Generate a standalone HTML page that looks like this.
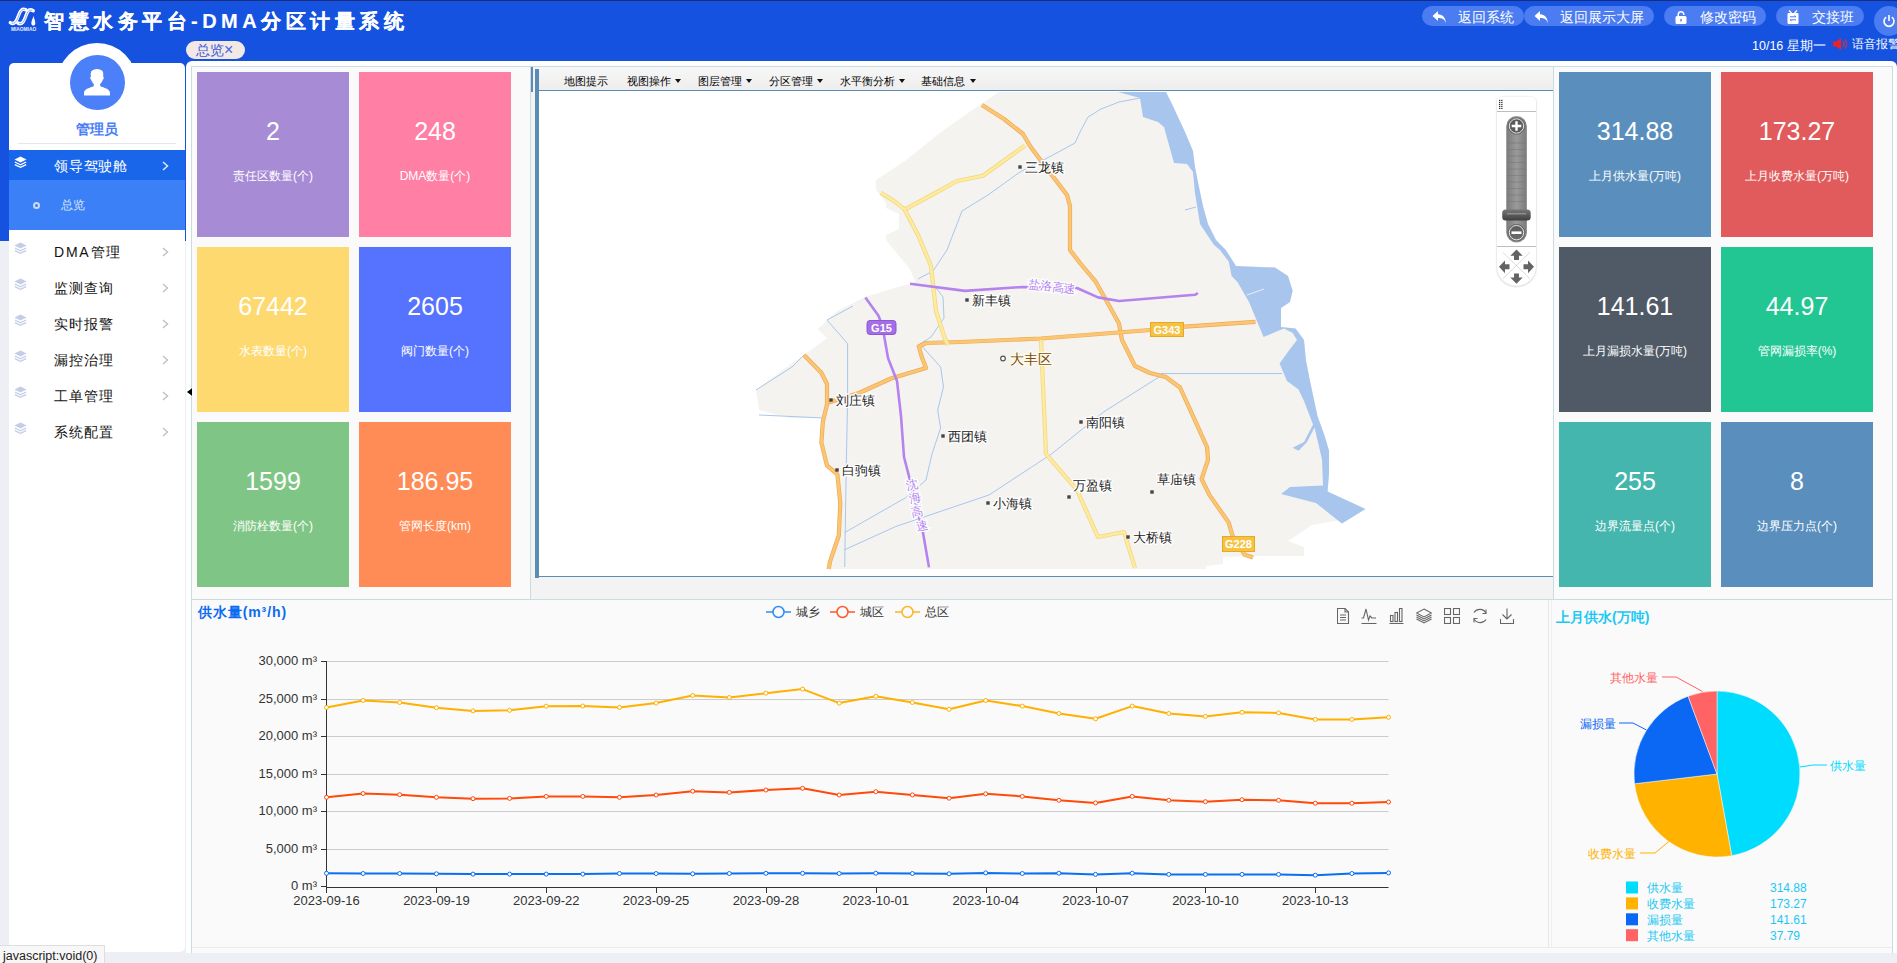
<!DOCTYPE html>
<html><head><meta charset="utf-8"><title>DMA</title>
<style>
*{margin:0;padding:0;box-sizing:border-box}
html,body{width:1897px;height:963px;overflow:hidden;background:#eeeff4;font-family:"Liberation Sans",sans-serif}
.abs{position:absolute}
svg{display:block}
svg text{font-family:"Liberation Sans",sans-serif}
#hdr{position:absolute;left:0;top:0;width:1897px;height:241px;background:linear-gradient(180deg,#1a2c7a 0,#1a2c7a 1px,#1552e0 1px,#1552e0 100%)}
#title{position:absolute;left:44px;top:9px;color:#fff;font-size:20px;font-weight:bold;letter-spacing:4.5px;white-space:nowrap;line-height:24px;-webkit-text-stroke:0.15px #fff}
.hbtn{position:absolute;top:6px;height:20px;border-radius:10px;background:#4b7cf2;color:#fff;font-size:14px;line-height:20px;white-space:nowrap}
.hbtn span{position:absolute;top:1px}
.hbtn svg{position:absolute;top:3px}
.mi{position:absolute;left:9px;width:176px;height:30px;font-size:14px;color:#222;white-space:nowrap}
.mi .t{position:absolute;left:45px;top:6px;line-height:18px;letter-spacing:1.2px}
.mi svg{position:absolute}
.tile{position:absolute;width:152px;height:165px;color:#fff;text-align:center}
.tile .n{position:absolute;left:0;right:0;top:44px;font-size:25px;line-height:30px}
.tile .l{position:absolute;left:0;right:0;top:97px;font-size:12px;line-height:14px}
.mt{position:absolute;top:74px;font-size:11px;line-height:14px;color:#000;white-space:nowrap}
.arr{position:absolute;top:79px;width:0;height:0;border-left:3.5px solid transparent;border-right:3.5px solid transparent;border-top:4px solid #111}
</style></head><body>
<div id="hdr"></div>
<svg class="abs" style="left:5px;top:3px" width="40" height="32" viewBox="5 3 40 32">
<path d="M10.3,22.6 C14.5,25.5 16.5,21 18.5,15.5 C20.5,10 22,8.3 26,9.8" fill="none" stroke="#fff" stroke-width="3.4" stroke-linecap="round"/>
<path d="M11.5,23 C15,24.6 17,20.5 18.8,15.5 C20.6,10.5 22,9 25,9.8" fill="none" stroke="#2d62e4" stroke-width="0.5"/>
<path d="M17.8,23 C22,25.8 24,21 26,15.5 C28,10 29.5,8.5 33.2,10.8" fill="none" stroke="#fff" stroke-width="3.4" stroke-linecap="round"/>
<path d="M19,23.4 C22.5,25 24.5,20.5 26.3,15.5 C28.1,10.5 29.5,9.2 32.2,10.5" fill="none" stroke="#2d62e4" stroke-width="0.5"/>
<path d="M33.5,16 C34.5,19 35.3,21.5 35.3,23.3 C35.3,24.7 34.4,25.6 33.3,25.6 C32.2,25.6 31.3,24.7 31.3,23.3 C31.3,21.5 32.5,19 33.5,16Z" fill="#fff"/>
<text x="11" y="30.9" font-size="4.8" fill="#e8f0ff" font-weight="bold" textLength="25.2" lengthAdjust="spacingAndGlyphs">MIAOMIAO</text>
</svg>
<div id="title">智慧水务平台-DMA分区计量系统</div>
<div class="hbtn" style="left:1422px;width:102px"><span style="left:36px">返回系统</span></div>
<div class="abs" style="left:1432px;top:10px"><svg width="15" height="14" viewBox="0 0 15 14"><path d="M6,1 L0.5,6 L6,11 L6,8 C10,8 12.5,9 14,13 C13.5,7.5 11,4.5 6,4.2 Z" fill="#fff"/></svg></div>
<div class="hbtn" style="left:1524px;width:130px"><span style="left:36px">返回展示大屏</span></div>
<div class="abs" style="left:1534px;top:10px"><svg width="15" height="14" viewBox="0 0 15 14"><path d="M6,1 L0.5,6 L6,11 L6,8 C10,8 12.5,9 14,13 C13.5,7.5 11,4.5 6,4.2 Z" fill="#fff"/></svg></div>
<div class="hbtn" style="left:1664px;width:102px"><span style="left:36px">修改密码</span></div>
<div class="abs" style="left:1674px;top:10px"><svg width="14" height="14" viewBox="0 0 14 14"><path d="M3.5,6 V4.5 A3.5,3.5 0 0 1 10.5,4.5 V5 H9 V4.5 A2,2 0 0 0 5,4.5 V6Z" fill="#fff"/><rect x="1.5" y="6" width="11" height="8" rx="1.5" fill="#fff"/><rect x="6.3" y="9" width="1.4" height="2.5" fill="#4b7cf2"/></svg></div>
<div class="hbtn" style="left:1776px;width:88px"><span style="left:36px">交接班</span></div>
<div class="abs" style="left:1786px;top:10px"><svg width="14" height="14" viewBox="0 0 14 14"><path d="M3,0.5 L5.5,3 M11,0.5 L8.5,3" stroke="#fff" stroke-width="1.3"/><rect x="1.5" y="3" width="11" height="11" rx="1" fill="#fff"/><path d="M4,6.8 H10 L8.5,5.6 M10,9.8 H4 L5.5,11" stroke="#4b7cf2" stroke-width="1" fill="none"/></svg></div>
<div class="abs" style="left:1874px;top:6px;width:30px;height:30px;border-radius:50%;background:#4b7cf2"></div>
<svg class="abs" style="left:1882px;top:14px" width="14" height="14" viewBox="0 0 14 14"><path d="M4.2,3.2 A5,5 0 1 0 9.8,3.2" fill="none" stroke="#fff" stroke-width="1.6"/><line x1="7" y1="1" x2="7" y2="7" stroke="#fff" stroke-width="1.6"/></svg>
<div class="abs" style="left:1752px;top:39px;color:#fff;font-size:12.5px;line-height:14px;white-space:nowrap">10/16 星期一</div>
<svg class="abs" style="left:1833px;top:38px" width="16" height="12" viewBox="0 0 16 12"><rect x="0" y="3.5" width="3" height="5" fill="#e8232a"/><path d="M3,3.5 L8,0 V12 L3,8.5Z" fill="#e8232a"/><path d="M10,3 Q12,6 10,9 M12,1.5 Q15,6 12,10.5" stroke="#d03040" stroke-width="1.2" fill="none"/></svg>
<div class="abs" style="left:1852px;top:37px;color:#fff;font-size:12px;line-height:14px;white-space:nowrap">语音报警</div>
<div class="abs" style="left:186px;top:41px;width:59px;height:18px;border-radius:9px;background:#f2e9e7;color:#3c5bd8;font-size:14px;line-height:18px;padding-left:10px;white-space:nowrap">总览<span style="font-size:16px;color:#4a66e8;vertical-align:top">×</span></div>
<div class="abs" style="left:9px;top:63px;width:176px;height:889px;background:#fff;border-radius:5px"></div>
<div class="abs" style="left:57px;top:42.5px;width:80px;height:80px;border-radius:50%;background:#fff"></div>
<div class="abs" style="left:69.5px;top:54.5px;width:55px;height:55px;border-radius:50%;background:#4c80f8"></div>
<svg class="abs" style="left:83px;top:68px" width="28" height="29" viewBox="0 0 28 29"><path d="M14,1 C11.5,1 10.5,1.8 9.5,2.3 C8,3 7.5,5 7.8,8.5 C7,9.3 7.1,11 8,11.6 C8.6,13.5 9.6,15 10.8,16 V18.3 C7,19.8 1.5,20.8 1,24.5 V27.5 H27 V24.5 C26.5,20.8 21,19.8 17.2,18.3 V16 C18.4,15 19.4,13.5 20,11.6 C20.9,11 21,9.3 20.2,8.5 C20.5,5 20,3 18.5,2.3 C17.5,1.8 16.5,1 14,1Z" fill="#fff"/></svg>
<div class="abs" style="left:9px;top:120px;width:176px;text-align:center;color:#4a7ef6;font-size:14px;line-height:18px;font-weight:bold">管理员</div>
<div class="abs" style="left:18px;top:143px;width:158px;height:1px;background:#e4e7ef"></div>
<div class="abs" style="left:9px;top:150px;width:176px;height:30px;background:#1a66eb"></div>
<div class="abs" style="left:9px;top:180px;width:176px;height:50px;background:#3b80f6"></div>
<div class="abs" style="left:14px;top:156px"><svg width="13" height="13" viewBox="0 0 13 13"><path d="M6.5,0.5 L12.5,3.5 L6.5,6.5 L0.5,3.5Z" fill="#fff"/><path d="M0.8,6 L6.5,8.8 L12.2,6 M0.8,8.6 L6.5,11.4 L12.2,8.6" fill="none" stroke="#fff" stroke-width="1.3"/></svg></div>
<div class="abs" style="left:54px;top:157px;color:#fff;font-size:14px;line-height:18px;letter-spacing:0.8px;white-space:nowrap">领导驾驶舱</div>
<div class="abs" style="left:162px;top:161px"><svg width="7" height="10" viewBox="0 0 7 10"><path d="M1,1 L5.5,5 L1,9" fill="none" stroke="#e0e8ff" stroke-width="1.5"/></svg></div>
<div class="abs" style="left:33px;top:202px;width:7px;height:7px;border-radius:50%;border:2px solid #c9d9f8"></div>
<div class="abs" style="left:61px;top:197px;color:#dce6fb;font-size:12px;line-height:16px">总览</div>
<div class="abs" style="left:14px;top:242px"><svg width="13" height="13" viewBox="0 0 13 13"><path d="M6.5,0.5 L12.5,3.5 L6.5,6.5 L0.5,3.5Z" fill="#c3cde6"/><path d="M0.8,6 L6.5,8.8 L12.2,6 M0.8,8.6 L6.5,11.4 L12.2,8.6" fill="none" stroke="#c3cde6" stroke-width="1.3"/></svg></div>
<div class="abs" style="left:54px;top:243px;color:#111;font-size:14px;line-height:18px;letter-spacing:1.8px;white-space:nowrap">DMA管理</div>
<div class="abs" style="left:162px;top:247px"><svg width="7" height="10" viewBox="0 0 7 10"><path d="M1,1 L5.5,5 L1,9" fill="none" stroke="#c2c2c2" stroke-width="1.5"/></svg></div>
<div class="abs" style="left:14px;top:278px"><svg width="13" height="13" viewBox="0 0 13 13"><path d="M6.5,0.5 L12.5,3.5 L6.5,6.5 L0.5,3.5Z" fill="#c3cde6"/><path d="M0.8,6 L6.5,8.8 L12.2,6 M0.8,8.6 L6.5,11.4 L12.2,8.6" fill="none" stroke="#c3cde6" stroke-width="1.3"/></svg></div>
<div class="abs" style="left:54px;top:279px;color:#111;font-size:14px;line-height:18px;letter-spacing:0.9px;white-space:nowrap">监测查询</div>
<div class="abs" style="left:162px;top:283px"><svg width="7" height="10" viewBox="0 0 7 10"><path d="M1,1 L5.5,5 L1,9" fill="none" stroke="#c2c2c2" stroke-width="1.5"/></svg></div>
<div class="abs" style="left:14px;top:314px"><svg width="13" height="13" viewBox="0 0 13 13"><path d="M6.5,0.5 L12.5,3.5 L6.5,6.5 L0.5,3.5Z" fill="#c3cde6"/><path d="M0.8,6 L6.5,8.8 L12.2,6 M0.8,8.6 L6.5,11.4 L12.2,8.6" fill="none" stroke="#c3cde6" stroke-width="1.3"/></svg></div>
<div class="abs" style="left:54px;top:315px;color:#111;font-size:14px;line-height:18px;letter-spacing:0.9px;white-space:nowrap">实时报警</div>
<div class="abs" style="left:162px;top:319px"><svg width="7" height="10" viewBox="0 0 7 10"><path d="M1,1 L5.5,5 L1,9" fill="none" stroke="#c2c2c2" stroke-width="1.5"/></svg></div>
<div class="abs" style="left:14px;top:350px"><svg width="13" height="13" viewBox="0 0 13 13"><path d="M6.5,0.5 L12.5,3.5 L6.5,6.5 L0.5,3.5Z" fill="#c3cde6"/><path d="M0.8,6 L6.5,8.8 L12.2,6 M0.8,8.6 L6.5,11.4 L12.2,8.6" fill="none" stroke="#c3cde6" stroke-width="1.3"/></svg></div>
<div class="abs" style="left:54px;top:351px;color:#111;font-size:14px;line-height:18px;letter-spacing:0.9px;white-space:nowrap">漏控治理</div>
<div class="abs" style="left:162px;top:355px"><svg width="7" height="10" viewBox="0 0 7 10"><path d="M1,1 L5.5,5 L1,9" fill="none" stroke="#c2c2c2" stroke-width="1.5"/></svg></div>
<div class="abs" style="left:14px;top:386px"><svg width="13" height="13" viewBox="0 0 13 13"><path d="M6.5,0.5 L12.5,3.5 L6.5,6.5 L0.5,3.5Z" fill="#c3cde6"/><path d="M0.8,6 L6.5,8.8 L12.2,6 M0.8,8.6 L6.5,11.4 L12.2,8.6" fill="none" stroke="#c3cde6" stroke-width="1.3"/></svg></div>
<div class="abs" style="left:54px;top:387px;color:#111;font-size:14px;line-height:18px;letter-spacing:0.9px;white-space:nowrap">工单管理</div>
<div class="abs" style="left:162px;top:391px"><svg width="7" height="10" viewBox="0 0 7 10"><path d="M1,1 L5.5,5 L1,9" fill="none" stroke="#c2c2c2" stroke-width="1.5"/></svg></div>
<div class="abs" style="left:14px;top:422px"><svg width="13" height="13" viewBox="0 0 13 13"><path d="M6.5,0.5 L12.5,3.5 L6.5,6.5 L0.5,3.5Z" fill="#c3cde6"/><path d="M0.8,6 L6.5,8.8 L12.2,6 M0.8,8.6 L6.5,11.4 L12.2,8.6" fill="none" stroke="#c3cde6" stroke-width="1.3"/></svg></div>
<div class="abs" style="left:54px;top:423px;color:#111;font-size:14px;line-height:18px;letter-spacing:0.9px;white-space:nowrap">系统配置</div>
<div class="abs" style="left:162px;top:427px"><svg width="7" height="10" viewBox="0 0 7 10"><path d="M1,1 L5.5,5 L1,9" fill="none" stroke="#c2c2c2" stroke-width="1.5"/></svg></div>
<div class="abs" style="left:186px;top:61px;width:1711px;height:892px;background:#fff;border-radius:6px 6px 0 0"></div>
<div class="abs" style="left:191px;top:66px;width:1702px;height:887px;background:#fafafa;border:1px solid #c9dce2;border-bottom:none"></div>
<div class="abs" style="left:530px;top:67px;width:1024px;height:532px;background:#f3f3f3;border-left:1px solid #c9dce2;border-right:1px solid #c9dce2"></div>
<div class="abs" style="left:531px;top:67px;width:2px;height:25px;background:#5b8db4"></div>
<div class="abs" style="left:535px;top:69px;width:4px;height:509px;background:#5b8db4"></div>
<div class="abs" style="left:539px;top:67px;width:1014px;height:24px;background:linear-gradient(#f7f7f7,#ededed)"></div>
<div class="abs" style="left:539px;top:90px;width:1014px;height:1px;background:#5b8db4"></div>
<div class="abs" style="left:539px;top:91px;width:1014px;height:485px;background:#fff"></div>
<div class="abs" style="left:539px;top:576px;width:1014px;height:1px;background:#5b8db4"></div>
<div class="mt" style="left:564px">地图提示</div>
<div class="mt" style="left:627px">视图操作</div>
<div class="arr" style="left:675px"></div>
<div class="mt" style="left:698px">图层管理</div>
<div class="arr" style="left:746px"></div>
<div class="mt" style="left:769px">分区管理</div>
<div class="arr" style="left:817px"></div>
<div class="mt" style="left:840px">水平衡分析</div>
<div class="arr" style="left:899px"></div>
<div class="mt" style="left:921px">基础信息</div>
<div class="arr" style="left:970px"></div>
<div class="abs" style="left:191px;top:599px;width:1702px;height:1px;background:#c9dce2"></div>
<div class="abs" style="left:1548px;top:600px;width:1px;height:347px;background:#e6e6e6"></div>
<div class="abs" style="left:1551px;top:600px;width:1px;height:347px;background:#efefef"></div>
<div class="abs" style="left:192px;top:947px;width:1700px;height:1px;background:#ebebeb"></div>
<div class="abs" style="left:198px;top:603px;color:#0a6cf0;font-size:14px;line-height:18px;font-weight:bold;letter-spacing:0.9px;white-space:nowrap">供水量(m³/h)</div>
<div class="abs" style="left:1556px;top:608px;color:#1cc8f4;font-size:14px;line-height:18px;font-weight:bold;white-space:nowrap">上月供水(万吨)</div>
<svg class="abs" style="left:766px;top:605px" width="25" height="14" viewBox="0 0 25 14"><line x1="0" y1="7" x2="25" y2="7" stroke="#2f8cf5" stroke-width="1.5"/><circle cx="12.5" cy="7" r="5.5" fill="#fafafa" stroke="#2f8cf5" stroke-width="1.5"/></svg>
<div class="abs" style="left:796px;top:604px;color:#333;font-size:12px;line-height:16px">城乡</div>
<svg class="abs" style="left:830px;top:605px" width="25" height="14" viewBox="0 0 25 14"><line x1="0" y1="7" x2="25" y2="7" stroke="#fc5a2a" stroke-width="1.5"/><circle cx="12.5" cy="7" r="5.5" fill="#fafafa" stroke="#fc5a2a" stroke-width="1.5"/></svg>
<div class="abs" style="left:860px;top:604px;color:#333;font-size:12px;line-height:16px">城区</div>
<svg class="abs" style="left:895px;top:605px" width="25" height="14" viewBox="0 0 25 14"><line x1="0" y1="7" x2="25" y2="7" stroke="#fdb52a" stroke-width="1.5"/><circle cx="12.5" cy="7" r="5.5" fill="#fafafa" stroke="#fdb52a" stroke-width="1.5"/></svg>
<div class="abs" style="left:925px;top:604px;color:#333;font-size:12px;line-height:16px">总区</div>
<svg class="abs" style="left:1337px;top:608px" width="16" height="16" viewBox="0 0 16 16"><path d="M0.5,0.5 H8 L11.5,4 V15.5 H0.5Z" fill="none" stroke="#666" stroke-width="1.1"/><path d="M8,0.5 V4 H11.5" fill="none" stroke="#666" stroke-width="1.1"/><path d="M3,7 H9 M3,9.5 H9 M3,12 H9" fill="none" stroke="#666" stroke-width="1.1"/></svg>
<svg class="abs" style="left:1361px;top:608px" width="16" height="16" viewBox="0 0 16 16"><path d="M0.5,10 L2.5,10 L5,1 L7.5,12 L9,8 L11,10 H15" fill="none" stroke="#666" stroke-width="1.1"/><path d="M0.5,15.5 H15.5" fill="none" stroke="#666" stroke-width="1.1"/></svg>
<svg class="abs" style="left:1389px;top:608px" width="16" height="16" viewBox="0 0 16 16"><rect x="1.5" y="7.5" width="2.5" height="6" fill="none" stroke="#666" stroke-width="1.1"/><rect x="6" y="4.5" width="2.5" height="9" fill="none" stroke="#666" stroke-width="1.1"/><rect x="10.5" y="0.5" width="2.5" height="13" fill="none" stroke="#666" stroke-width="1.1"/><path d="M0.5,15.5 H14.5" fill="none" stroke="#666" stroke-width="1.1"/></svg>
<svg class="abs" style="left:1416px;top:608px" width="16" height="16" viewBox="0 0 16 16"><path d="M8,1 L15.5,5 L8,9 L0.5,5Z" fill="none" stroke="#666" stroke-width="1.1"/><path d="M0.5,7 L8,11 L15.5,7 M0.5,9 L8,13 L15.5,9 M0.5,11 L8,15 L15.5,11" fill="none" stroke="#666" stroke-width="1.1"/></svg>
<svg class="abs" style="left:1444px;top:608px" width="16" height="16" viewBox="0 0 16 16"><rect x="0.5" y="0.5" width="6" height="6" fill="none" stroke="#666" stroke-width="1.1"/><rect x="9.5" y="0.5" width="6" height="6" fill="none" stroke="#666" stroke-width="1.1"/><rect x="0.5" y="9.5" width="6" height="6" fill="none" stroke="#666" stroke-width="1.1"/><rect x="9.5" y="9.5" width="6" height="6" fill="none" stroke="#666" stroke-width="1.1"/></svg>
<svg class="abs" style="left:1472px;top:608px" width="16" height="16" viewBox="0 0 16 16"><path d="M14,5 A7,7 0 0 0 2,4.5 M2,11 A7,7 0 0 0 14,11.5" fill="none" stroke="#666" stroke-width="1.1"/><path d="M14,1.5 V5.5 H10.5 M2,14.5 V10.5 H5.5" fill="none" stroke="#666" stroke-width="1.1"/></svg>
<svg class="abs" style="left:1500px;top:608px" width="16" height="16" viewBox="0 0 16 16"><path d="M7,0.5 V11 M2.5,6.5 L7,11 L11.5,6.5" fill="none" stroke="#666" stroke-width="1.1"/><path d="M0.5,11 V15.5 H13.5 V11" fill="none" stroke="#666" stroke-width="1.1"/></svg>
<svg class="abs" style="left:539px;top:91px" width="1014" height="485" viewBox="539 91 1014 485">
<polygon points="999,92 1166,92 1172,104 1178,117 1185,132 1193,151 1195,167 1199,187 1203,206 1208,224 1216,240 1225.8,250 1236,266 1275,267.5 1288,276 1292.7,290.7 1290,302 1281,308 1281,327 1295.6,328.5 1304,340 1306,360.5 1310,381 1317.5,416 1324.7,436 1329,450.7 1329,474 1327.6,491.5 1365.5,509 1342,523.5 1338,520.5 1312,525 1288,541 1304,547 1304,556 1253,556 1223,557 1223,564 1206,566 1206,569 830,569 829,565 840,533 839,474 826,463 823,437 824,418 789,418 759,410 756,390 787,367 804,355 827,338 818,329 836,312 853,303 865,297 915,282 910,269 899,256 886,240 886,235 899,229 899,214 886,208 886,203 876,190 876,180 905,161 941,132 981,104 999,92" fill="#f4f3ef"/>
<polygon points="1166,92 1172,104 1178,117 1185,132 1193,151 1195,167 1199,187 1203,206 1208,224 1216,240 1225.8,250 1236,266 1275,267.5 1288,276 1292.7,290.7 1290,302 1281,308 1281,327 1295.6,328.5 1304,340 1306,360.5 1310,381 1317.5,416 1324.7,436 1329,450.7 1329,474 1327.6,491.5 1365.5,509 1342,523.5 1338,520.5 1316,503 1281,494 1290,487 1323,485.6 1322,459.5 1314.5,427.5 1307,442 1298.5,450.7 1292.7,447.8 1304,442 1313,424.5 1304,401 1298.5,389.6 1287,381 1279.6,363.5 1290,349 1297,340 1292.7,333 1284,328.5 1263.6,337 1249,302 1237.5,282 1231.6,276 1228.7,261.6 1220,250 1214,245 1200,224 1195,193 1193,172 1187,164 1174,163 1164,127 1158,122 1143,117 1140,98 1118,92" fill="#a8c5ed"/>
<polyline points="1140,98 1119,102 1101,109 1088,117 1080,132 1075,143 1051,156 1020,172 988,195 962,211 947,250 933,271 918,279" fill="none" stroke="#a9c6ee" stroke-width="1"/>
<polyline points="933,284 943,297 944,318 931,337 920,344 940.6,367 943.5,387 937.7,410 940.6,428 932,454 926,480 905.7,497.7 844.7,532.5" fill="none" stroke="#a9c6ee" stroke-width="1"/>
<polyline points="853,306 827,320 847.6,343.6 847.6,400 846,480 844.7,567" fill="none" stroke="#a9c6ee" stroke-width="1"/>
<polyline points="1160.6,376 1103.5,412 1051.5,454 989,495 895.8,526.5 844,550" fill="none" stroke="#a9c6ee" stroke-width="1"/>
<polyline points="1160.6,373.5 1282,373.5" fill="none" stroke="#a9c6ee" stroke-width="1"/>
<polyline points="756,390 792,367 804,355" fill="none" stroke="#a9c6ee" stroke-width="1"/>
<polyline points="759,415 824,418" fill="none" stroke="#a9c6ee" stroke-width="1"/>
<polyline points="1185,210 1196,207" fill="none" stroke="#a9c6ee" stroke-width="1"/>
<line x1="1247" y1="295" x2="1264" y2="289" stroke="#e8f0fa" stroke-width="1"/>
<polyline points="982,105 1004,119 1023,134 1030,146 1051,174 1067,195 1070,206 1070,250 1080,263 1095.7,281.7 1108.8,305 1119,323.6 1122,340 1135,366 1150,373 1165.8,377 1180,387.5 1196,422.6 1207,447 1208,460 1201.6,479 1209.7,495.4 1228.6,522.4 1232.6,536 1244.8,554.8 1253,557.5" fill="none" stroke="#eeaa55" stroke-width="4.2" stroke-linejoin="round"/>
<polyline points="982,105 1004,119 1023,134 1030,146 1051,174 1067,195 1070,206 1070,250 1080,263 1095.7,281.7 1108.8,305 1119,323.6 1122,340 1135,366 1150,373 1165.8,377 1180,387.5 1196,422.6 1207,447 1208,460 1201.6,479 1209.7,495.4 1228.6,522.4 1232.6,536 1244.8,554.8 1253,557.5" fill="none" stroke="#fbc673" stroke-width="2.8" stroke-linejoin="round"/>
<polyline points="827,403 859,393 891,378.5 926,368 921.7,356.7 918.8,346.5 926,343 960,342 1041,338.5 1150.7,330 1184.7,326.7 1255.4,321.8" fill="none" stroke="#eeaa55" stroke-width="4.2" stroke-linejoin="round"/>
<polyline points="827,403 859,393 891,378.5 926,368 921.7,356.7 918.8,346.5 926,343 960,342 1041,338.5 1150.7,330 1184.7,326.7 1255.4,321.8" fill="none" stroke="#fbc673" stroke-width="2.8" stroke-linejoin="round"/>
<polyline points="804,355 821.4,372.7 827,384 827,404.6 822.8,422 821.4,442.4 827,465.7 837.4,474.4 840.3,503.5 838.8,535.5 830,561.6 828.7,569" fill="none" stroke="#eeaa55" stroke-width="4.2" stroke-linejoin="round"/>
<polyline points="804,355 821.4,372.7 827,384 827,404.6 822.8,422 821.4,442.4 827,465.7 837.4,474.4 840.3,503.5 838.8,535.5 830,561.6 828.7,569" fill="none" stroke="#fbc673" stroke-width="2.8" stroke-linejoin="round"/>
<polyline points="1025,145.6 1009,157 983,175.7 957,181 936,192.7 904.7,209.7 896.9,203 881,192.7" fill="none" stroke="#f2d87c" stroke-width="4.2" stroke-linejoin="round"/>
<polyline points="1025,145.6 1009,157 983,175.7 957,181 936,192.7 904.7,209.7 896.9,203 881,192.7" fill="none" stroke="#fdeba2" stroke-width="2.6" stroke-linejoin="round"/>
<polyline points="904.7,209.7 918,235 931,266 933,284 936,311 945,339 948,345" fill="none" stroke="#f2d87c" stroke-width="4.2" stroke-linejoin="round"/>
<polyline points="904.7,209.7 918,235 931,266 933,284 936,311 945,339 948,345" fill="none" stroke="#fdeba2" stroke-width="2.6" stroke-linejoin="round"/>
<polyline points="1041,340 1046,454 1077,490 1098,537 1124,532 1135,568" fill="none" stroke="#f2d87c" stroke-width="4.2" stroke-linejoin="round"/>
<polyline points="1041,340 1046,454 1077,490 1098,537 1124,532 1135,568" fill="none" stroke="#fdeba2" stroke-width="2.6" stroke-linejoin="round"/>
<polyline points="910,283.8 965,290.9 1022.5,287 1077,288 1098,297.4 1119,301 1195,294.8 1198,293" fill="none" stroke="#b582ee" stroke-width="2.6" stroke-linejoin="round"/>
<polyline points="865.4,297.4 878.5,315.7 882.4,326 888,358 897,381 901,416 904,457 911.5,486 923,532.6 929,567.4" fill="none" stroke="#b582ee" stroke-width="2.6" stroke-linejoin="round"/>
<rect x="867" y="320.5" width="29" height="14" rx="3" fill="#a46ee6" stroke="#8e57d8" stroke-width="1"/>
<text x="881.5" y="331.5" text-anchor="middle" font-size="11" font-weight="bold" fill="#fff">G15</text>
<rect x="1150.5" y="322.5" width="33" height="14" fill="#f5c243" stroke="#e8a820" stroke-width="1"/>
<text x="1167" y="333.5" text-anchor="middle" font-size="11" font-weight="bold" fill="#fff">G343</text>
<rect x="1222.5" y="536.5" width="32" height="15" fill="#f5c243" stroke="#e8a820" stroke-width="1"/>
<text x="1238.5" y="548" text-anchor="middle" font-size="11" font-weight="bold" fill="#fff">G228</text>
<text x="1028" y="291" font-size="12" fill="#b384ef" stroke="#fff" stroke-width="2.5" paint-order="stroke" transform="rotate(7 1055 287)">盐洛高速</text>
<g font-size="12" fill="#b384ef" stroke="#fff" stroke-width="2.5" paint-order="stroke"><text x="906.4" y="488.5" transform="rotate(-12 912.4 484.0)">沈</text><text x="909.0" y="502.2" transform="rotate(-12 915.0 497.7)">海</text><text x="911.4" y="515.9" transform="rotate(-12 917.4 511.4)">高</text><text x="915.6" y="529.6" transform="rotate(-12 921.6 525.1)">速</text></g>
<g font-size="12.5" fill="#222" stroke="#fff" stroke-width="2.5" paint-order="stroke">
<text x="1025" y="171.5">三龙镇</text>
<text x="972" y="304.5">新丰镇</text>
<text x="836" y="404.5">刘庄镇</text>
<text x="948" y="440.5">西团镇</text>
<text x="1086" y="426.5">南阳镇</text>
<text x="842" y="474.5">白驹镇</text>
<text x="993" y="507.5">小海镇</text>
<text x="1133" y="541.5">大桥镇</text>
<text x="1073" y="489.5">万盈镇</text><text x="1157" y="483.5">草庙镇</text>
</g>
<rect x="1018.3" y="165.3" width="3.4" height="3.4" fill="#444"/>
<rect x="965.3" y="298.3" width="3.4" height="3.4" fill="#444"/>
<rect x="829.3" y="398.3" width="3.4" height="3.4" fill="#444"/>
<rect x="941.3" y="434.3" width="3.4" height="3.4" fill="#444"/>
<rect x="1079.3" y="420.3" width="3.4" height="3.4" fill="#444"/>
<rect x="835.3" y="468.3" width="3.4" height="3.4" fill="#444"/>
<rect x="986.3" y="501.3" width="3.4" height="3.4" fill="#444"/>
<rect x="1126.3" y="535.3" width="3.4" height="3.4" fill="#444"/>
<rect x="1067.3" y="495.3" width="3.4" height="3.4" fill="#444"/>
<rect x="1150.3" y="490.3" width="3.4" height="3.4" fill="#444"/>
<circle cx="1003" cy="358.5" r="2.3" fill="#fff" stroke="#555" stroke-width="1.2"/>
<text x="1010" y="363.5" font-size="13.5" fill="#7a4a1a" stroke="#fffbe6" stroke-width="2.5" paint-order="stroke">大丰区</text>
</svg>
<svg class="abs" style="left:1490px;top:90px" width="56" height="205" viewBox="1490 90 56 205">
<defs><linearGradient id="zg" x1="0" x2="1" y1="0" y2="0"><stop offset="0" stop-color="#7a7a7a"/><stop offset="0.5" stop-color="#9a9a9a"/><stop offset="1" stop-color="#7a7a7a"/></linearGradient>
<linearGradient id="zh" x1="0" x2="0" y1="0" y2="1"><stop offset="0" stop-color="#777"/><stop offset="1" stop-color="#3f3f3f"/></linearGradient>
<linearGradient id="zb" x1="0" x2="0" y1="0" y2="1"><stop offset="0" stop-color="#5a5a5a"/><stop offset="1" stop-color="#6e6e6e"/></linearGradient>
<filter id="zs" x="-20%" y="-10%" width="140%" height="120%"><feGaussianBlur stdDeviation="0.9"/></filter></defs>
<path d="M1497,102 Q1497,97 1502,97 H1531 Q1536,97 1536,102 V266.5 A19.5,19.5 0 0 1 1497,266.5Z" fill="#999" opacity="0.55" filter="url(#zs)" transform="translate(0,0.6)"/>
<path d="M1497,102 Q1497,97 1502,97 H1531 Q1536,97 1536,102 V266.5 A19.5,19.5 0 0 1 1497,266.5Z" fill="#fff"/>
<path d="M1497,111.5 H1536 M1497,246.5 H1536" stroke="#bdbdbd" stroke-width="1"/>
<g fill="#333"><rect x="1499.0" y="99.8" width="1.3" height="1.2"/><rect x="1499.0" y="101.8" width="1.3" height="1.2"/><rect x="1499.0" y="103.8" width="1.3" height="1.2"/><rect x="1499.0" y="105.8" width="1.3" height="1.2"/><rect x="1499.0" y="107.8" width="1.3" height="1.2"/><rect x="1501.2" y="99.8" width="1.3" height="1.2"/><rect x="1501.2" y="101.8" width="1.3" height="1.2"/><rect x="1501.2" y="103.8" width="1.3" height="1.2"/><rect x="1501.2" y="105.8" width="1.3" height="1.2"/><rect x="1501.2" y="107.8" width="1.3" height="1.2"/></g>
<rect x="1506.3" y="116" width="20.5" height="126.5" rx="10.25" fill="url(#zg)"/>
<g stroke="#777" stroke-width="0.7" opacity="0.8"><line x1="1507" y1="143.0" x2="1526" y2="143.0"/><line x1="1507" y1="149.5" x2="1526" y2="149.5"/><line x1="1507" y1="156.0" x2="1526" y2="156.0"/><line x1="1507" y1="162.5" x2="1526" y2="162.5"/><line x1="1507" y1="169.0" x2="1526" y2="169.0"/><line x1="1507" y1="175.5" x2="1526" y2="175.5"/><line x1="1507" y1="182.0" x2="1526" y2="182.0"/><line x1="1507" y1="188.5" x2="1526" y2="188.5"/><line x1="1507" y1="195.0" x2="1526" y2="195.0"/><line x1="1507" y1="201.5" x2="1526" y2="201.5"/></g>
<circle cx="1516.5" cy="126" r="8.3" fill="#5c5c5c" stroke="#6a6a6a" stroke-width="1"/>
<circle cx="1516.5" cy="126" r="7.2" fill="none" stroke="#e6e6e6" stroke-width="1"/>
<path d="M1516.5,121.2 V130.8 M1511.7,126 H1521.3" stroke="#fff" stroke-width="2.4"/>
<circle cx="1516.5" cy="232.7" r="8.3" fill="url(#zb)" stroke="#6a6a6a" stroke-width="1"/>
<circle cx="1516.5" cy="232.7" r="7.2" fill="none" stroke="#e6e6e6" stroke-width="1"/>
<path d="M1511.5,232.7 H1521.5" stroke="#fff" stroke-width="2.6"/>
<rect x="1502.2" y="209.5" width="28.5" height="11" rx="3.5" fill="url(#zh)"/>
<path d="M1507,213.8 H1526" stroke="#aaa" stroke-width="0.9"/>
<path d="M1503,252.4 L1529.8,278.6 M1529.8,252.4 L1503,278.6" stroke="#c8c8c8" stroke-width="0.7"/>
<g fill="#646464">
<path d="M1516.5,249.6 L1522.7,255.8 H1519 V259.9 H1514 V255.8 H1510.3Z"/>
<path d="M1516.5,283.7 L1522.7,277.5 H1519 V273.4 H1514 V277.5 H1510.3Z"/>
<path d="M1499,266.8 L1505,260.5 V264.3 H1509.5 V269.3 H1505 V273.2Z"/>
<path d="M1534,266.8 L1528,260.5 V264.3 H1523.5 V269.3 H1528 V273.2Z"/>
</g>
</svg>
<div class="tile" style="left:197px;top:72px;background:#a78bd5"><div class="n">2</div><div class="l">责任区数量(个)</div></div>
<div class="tile" style="left:359px;top:72px;background:#ff7fa5"><div class="n">248</div><div class="l">DMA数量(个)</div></div>
<div class="tile" style="left:197px;top:247px;background:#fdd970"><div class="n">67442</div><div class="l">水表数量(个)</div></div>
<div class="tile" style="left:359px;top:247px;background:#5573fe"><div class="n">2605</div><div class="l">阀门数量(个)</div></div>
<div class="tile" style="left:197px;top:422px;background:#7fc686"><div class="n">1599</div><div class="l">消防栓数量(个)</div></div>
<div class="tile" style="left:359px;top:422px;background:#ff8c56"><div class="n">186.95</div><div class="l">管网长度(km)</div></div>
<div class="tile" style="left:1559px;top:72px;background:#5a8fbd"><div class="n">314.88</div><div class="l">上月供水量(万吨)</div></div>
<div class="tile" style="left:1721px;top:72px;background:#e15a5c"><div class="n">173.27</div><div class="l">上月收费水量(万吨)</div></div>
<div class="tile" style="left:1559px;top:247px;background:#4f5a66"><div class="n">141.61</div><div class="l">上月漏损水量(万吨)</div></div>
<div class="tile" style="left:1721px;top:247px;background:#22c692"><div class="n">44.97</div><div class="l">管网漏损率(%)</div></div>
<div class="tile" style="left:1559px;top:422px;background:#45b6ae"><div class="n">255</div><div class="l">边界流量点(个)</div></div>
<div class="tile" style="left:1721px;top:422px;background:#5a8fbd"><div class="n">8</div><div class="l">边界压力点(个)</div></div>
<svg class="abs" style="left:0;top:0" width="1897" height="963" viewBox="0 0 1897 963">
<line x1="326" y1="661.5" x2="1388.5" y2="661.5" stroke="#cccccc" stroke-width="1"/>
<line x1="321" y1="661.5" x2="326" y2="661.5" stroke="#333" stroke-width="1"/>
<text x="317" y="665.0" text-anchor="end" font-size="13" fill="#333">30,000 m³</text>
<line x1="326" y1="699.5" x2="1388.5" y2="699.5" stroke="#cccccc" stroke-width="1"/>
<line x1="321" y1="699.5" x2="326" y2="699.5" stroke="#333" stroke-width="1"/>
<text x="317" y="703.0" text-anchor="end" font-size="13" fill="#333">25,000 m³</text>
<line x1="326" y1="736.5" x2="1388.5" y2="736.5" stroke="#cccccc" stroke-width="1"/>
<line x1="321" y1="736.5" x2="326" y2="736.5" stroke="#333" stroke-width="1"/>
<text x="317" y="740.0" text-anchor="end" font-size="13" fill="#333">20,000 m³</text>
<line x1="326" y1="774.5" x2="1388.5" y2="774.5" stroke="#cccccc" stroke-width="1"/>
<line x1="321" y1="774.5" x2="326" y2="774.5" stroke="#333" stroke-width="1"/>
<text x="317" y="778.0" text-anchor="end" font-size="13" fill="#333">15,000 m³</text>
<line x1="326" y1="811.5" x2="1388.5" y2="811.5" stroke="#cccccc" stroke-width="1"/>
<line x1="321" y1="811.5" x2="326" y2="811.5" stroke="#333" stroke-width="1"/>
<text x="317" y="815.0" text-anchor="end" font-size="13" fill="#333">10,000 m³</text>
<line x1="326" y1="849.5" x2="1388.5" y2="849.5" stroke="#cccccc" stroke-width="1"/>
<line x1="321" y1="849.5" x2="326" y2="849.5" stroke="#333" stroke-width="1"/>
<text x="317" y="853.0" text-anchor="end" font-size="13" fill="#333">5,000 m³</text>
<line x1="321" y1="886.5" x2="326" y2="886.5" stroke="#333" stroke-width="1"/>
<text x="317" y="890.0" text-anchor="end" font-size="13" fill="#333">0 m³</text>
<line x1="326.5" y1="661" x2="326.5" y2="887" stroke="#333" stroke-width="1"/>
<line x1="326" y1="887.5" x2="1388.5" y2="887.5" stroke="#333" stroke-width="1"/>
<line x1="326.5" y1="887" x2="326.5" y2="893" stroke="#333" stroke-width="1"/>
<text x="326.5" y="905" text-anchor="middle" font-size="13" fill="#333">2023-09-16</text>
<line x1="436.5" y1="887" x2="436.5" y2="893" stroke="#333" stroke-width="1"/>
<text x="436.4" y="905" text-anchor="middle" font-size="13" fill="#333">2023-09-19</text>
<line x1="546.5" y1="887" x2="546.5" y2="893" stroke="#333" stroke-width="1"/>
<text x="546.2" y="905" text-anchor="middle" font-size="13" fill="#333">2023-09-22</text>
<line x1="656.5" y1="887" x2="656.5" y2="893" stroke="#333" stroke-width="1"/>
<text x="656.1" y="905" text-anchor="middle" font-size="13" fill="#333">2023-09-25</text>
<line x1="766.5" y1="887" x2="766.5" y2="893" stroke="#333" stroke-width="1"/>
<text x="765.9" y="905" text-anchor="middle" font-size="13" fill="#333">2023-09-28</text>
<line x1="876.5" y1="887" x2="876.5" y2="893" stroke="#333" stroke-width="1"/>
<text x="875.8" y="905" text-anchor="middle" font-size="13" fill="#333">2023-10-01</text>
<line x1="986.5" y1="887" x2="986.5" y2="893" stroke="#333" stroke-width="1"/>
<text x="985.7" y="905" text-anchor="middle" font-size="13" fill="#333">2023-10-04</text>
<line x1="1096.5" y1="887" x2="1096.5" y2="893" stroke="#333" stroke-width="1"/>
<text x="1095.5" y="905" text-anchor="middle" font-size="13" fill="#333">2023-10-07</text>
<line x1="1205.5" y1="887" x2="1205.5" y2="893" stroke="#333" stroke-width="1"/>
<text x="1205.4" y="905" text-anchor="middle" font-size="13" fill="#333">2023-10-10</text>
<line x1="1315.5" y1="887" x2="1315.5" y2="893" stroke="#333" stroke-width="1"/>
<text x="1315.3" y="905" text-anchor="middle" font-size="13" fill="#333">2023-10-13</text>
<polyline points="326.5,873.3 363.1,873.5 399.7,873.5 436.4,873.8 473.0,874.1 509.6,874.1 546.2,874.1 582.8,874.1 619.5,873.5 656.1,873.5 692.7,873.8 729.3,873.5 765.9,873.3 802.6,873.3 839.2,873.5 875.8,873.2 912.4,873.5 949.1,873.8 985.7,872.9 1022.3,873.5 1058.9,873.2 1095.5,874.4 1132.2,873.2 1168.8,874.4 1205.4,874.4 1242.0,874.4 1278.6,874.4 1315.3,875.2 1351.9,873.5 1388.5,872.9" fill="none" stroke="#0a6ff0" stroke-width="2" stroke-linejoin="round"/>
<circle cx="326.5" cy="873.3" r="2" fill="#fff" stroke="#0a6ff0" stroke-width="1"/>
<circle cx="363.1" cy="873.5" r="2" fill="#fff" stroke="#0a6ff0" stroke-width="1"/>
<circle cx="399.7" cy="873.5" r="2" fill="#fff" stroke="#0a6ff0" stroke-width="1"/>
<circle cx="436.4" cy="873.8" r="2" fill="#fff" stroke="#0a6ff0" stroke-width="1"/>
<circle cx="473.0" cy="874.1" r="2" fill="#fff" stroke="#0a6ff0" stroke-width="1"/>
<circle cx="509.6" cy="874.1" r="2" fill="#fff" stroke="#0a6ff0" stroke-width="1"/>
<circle cx="546.2" cy="874.1" r="2" fill="#fff" stroke="#0a6ff0" stroke-width="1"/>
<circle cx="582.8" cy="874.1" r="2" fill="#fff" stroke="#0a6ff0" stroke-width="1"/>
<circle cx="619.5" cy="873.5" r="2" fill="#fff" stroke="#0a6ff0" stroke-width="1"/>
<circle cx="656.1" cy="873.5" r="2" fill="#fff" stroke="#0a6ff0" stroke-width="1"/>
<circle cx="692.7" cy="873.8" r="2" fill="#fff" stroke="#0a6ff0" stroke-width="1"/>
<circle cx="729.3" cy="873.5" r="2" fill="#fff" stroke="#0a6ff0" stroke-width="1"/>
<circle cx="765.9" cy="873.3" r="2" fill="#fff" stroke="#0a6ff0" stroke-width="1"/>
<circle cx="802.6" cy="873.3" r="2" fill="#fff" stroke="#0a6ff0" stroke-width="1"/>
<circle cx="839.2" cy="873.5" r="2" fill="#fff" stroke="#0a6ff0" stroke-width="1"/>
<circle cx="875.8" cy="873.2" r="2" fill="#fff" stroke="#0a6ff0" stroke-width="1"/>
<circle cx="912.4" cy="873.5" r="2" fill="#fff" stroke="#0a6ff0" stroke-width="1"/>
<circle cx="949.1" cy="873.8" r="2" fill="#fff" stroke="#0a6ff0" stroke-width="1"/>
<circle cx="985.7" cy="872.9" r="2" fill="#fff" stroke="#0a6ff0" stroke-width="1"/>
<circle cx="1022.3" cy="873.5" r="2" fill="#fff" stroke="#0a6ff0" stroke-width="1"/>
<circle cx="1058.9" cy="873.2" r="2" fill="#fff" stroke="#0a6ff0" stroke-width="1"/>
<circle cx="1095.5" cy="874.4" r="2" fill="#fff" stroke="#0a6ff0" stroke-width="1"/>
<circle cx="1132.2" cy="873.2" r="2" fill="#fff" stroke="#0a6ff0" stroke-width="1"/>
<circle cx="1168.8" cy="874.4" r="2" fill="#fff" stroke="#0a6ff0" stroke-width="1"/>
<circle cx="1205.4" cy="874.4" r="2" fill="#fff" stroke="#0a6ff0" stroke-width="1"/>
<circle cx="1242.0" cy="874.4" r="2" fill="#fff" stroke="#0a6ff0" stroke-width="1"/>
<circle cx="1278.6" cy="874.4" r="2" fill="#fff" stroke="#0a6ff0" stroke-width="1"/>
<circle cx="1315.3" cy="875.2" r="2" fill="#fff" stroke="#0a6ff0" stroke-width="1"/>
<circle cx="1351.9" cy="873.5" r="2" fill="#fff" stroke="#0a6ff0" stroke-width="1"/>
<circle cx="1388.5" cy="872.9" r="2" fill="#fff" stroke="#0a6ff0" stroke-width="1"/>
<polyline points="326.5,797.3 363.1,793.5 399.7,794.7 436.4,797.3 473.0,798.7 509.6,798.4 546.2,796.4 582.8,796.4 619.5,797.3 656.1,795.0 692.7,791.2 729.3,792.4 765.9,790.0 802.6,788.3 839.2,795.0 875.8,791.7 912.4,794.9 949.1,798.2 985.7,793.8 1022.3,796.4 1058.9,800.3 1095.5,802.9 1132.2,796.4 1168.8,800.3 1205.4,801.7 1242.0,799.7 1278.6,800.3 1315.3,803.2 1351.9,803.2 1388.5,802.0" fill="none" stroke="#ff4a0a" stroke-width="2" stroke-linejoin="round"/>
<circle cx="326.5" cy="797.3" r="2" fill="#fff" stroke="#ff4a0a" stroke-width="1"/>
<circle cx="363.1" cy="793.5" r="2" fill="#fff" stroke="#ff4a0a" stroke-width="1"/>
<circle cx="399.7" cy="794.7" r="2" fill="#fff" stroke="#ff4a0a" stroke-width="1"/>
<circle cx="436.4" cy="797.3" r="2" fill="#fff" stroke="#ff4a0a" stroke-width="1"/>
<circle cx="473.0" cy="798.7" r="2" fill="#fff" stroke="#ff4a0a" stroke-width="1"/>
<circle cx="509.6" cy="798.4" r="2" fill="#fff" stroke="#ff4a0a" stroke-width="1"/>
<circle cx="546.2" cy="796.4" r="2" fill="#fff" stroke="#ff4a0a" stroke-width="1"/>
<circle cx="582.8" cy="796.4" r="2" fill="#fff" stroke="#ff4a0a" stroke-width="1"/>
<circle cx="619.5" cy="797.3" r="2" fill="#fff" stroke="#ff4a0a" stroke-width="1"/>
<circle cx="656.1" cy="795.0" r="2" fill="#fff" stroke="#ff4a0a" stroke-width="1"/>
<circle cx="692.7" cy="791.2" r="2" fill="#fff" stroke="#ff4a0a" stroke-width="1"/>
<circle cx="729.3" cy="792.4" r="2" fill="#fff" stroke="#ff4a0a" stroke-width="1"/>
<circle cx="765.9" cy="790.0" r="2" fill="#fff" stroke="#ff4a0a" stroke-width="1"/>
<circle cx="802.6" cy="788.3" r="2" fill="#fff" stroke="#ff4a0a" stroke-width="1"/>
<circle cx="839.2" cy="795.0" r="2" fill="#fff" stroke="#ff4a0a" stroke-width="1"/>
<circle cx="875.8" cy="791.7" r="2" fill="#fff" stroke="#ff4a0a" stroke-width="1"/>
<circle cx="912.4" cy="794.9" r="2" fill="#fff" stroke="#ff4a0a" stroke-width="1"/>
<circle cx="949.1" cy="798.2" r="2" fill="#fff" stroke="#ff4a0a" stroke-width="1"/>
<circle cx="985.7" cy="793.8" r="2" fill="#fff" stroke="#ff4a0a" stroke-width="1"/>
<circle cx="1022.3" cy="796.4" r="2" fill="#fff" stroke="#ff4a0a" stroke-width="1"/>
<circle cx="1058.9" cy="800.3" r="2" fill="#fff" stroke="#ff4a0a" stroke-width="1"/>
<circle cx="1095.5" cy="802.9" r="2" fill="#fff" stroke="#ff4a0a" stroke-width="1"/>
<circle cx="1132.2" cy="796.4" r="2" fill="#fff" stroke="#ff4a0a" stroke-width="1"/>
<circle cx="1168.8" cy="800.3" r="2" fill="#fff" stroke="#ff4a0a" stroke-width="1"/>
<circle cx="1205.4" cy="801.7" r="2" fill="#fff" stroke="#ff4a0a" stroke-width="1"/>
<circle cx="1242.0" cy="799.7" r="2" fill="#fff" stroke="#ff4a0a" stroke-width="1"/>
<circle cx="1278.6" cy="800.3" r="2" fill="#fff" stroke="#ff4a0a" stroke-width="1"/>
<circle cx="1315.3" cy="803.2" r="2" fill="#fff" stroke="#ff4a0a" stroke-width="1"/>
<circle cx="1351.9" cy="803.2" r="2" fill="#fff" stroke="#ff4a0a" stroke-width="1"/>
<circle cx="1388.5" cy="802.0" r="2" fill="#fff" stroke="#ff4a0a" stroke-width="1"/>
<polyline points="326.5,707.4 363.1,700.4 399.7,702.5 436.4,707.7 473.0,710.9 509.6,710.3 546.2,706.2 582.8,706.0 619.5,707.4 656.1,703.1 692.7,695.5 729.3,697.5 765.9,693.2 802.6,689.1 839.2,703.1 875.8,696.3 912.4,702.5 949.1,709.3 985.7,700.5 1022.3,706.1 1058.9,713.5 1095.5,718.8 1132.2,706.1 1168.8,713.5 1205.4,716.4 1242.0,712.3 1278.6,712.9 1315.3,719.4 1351.9,719.4 1388.5,717.3" fill="none" stroke="#ffb000" stroke-width="2" stroke-linejoin="round"/>
<circle cx="326.5" cy="707.4" r="2" fill="#fff" stroke="#ffb000" stroke-width="1"/>
<circle cx="363.1" cy="700.4" r="2" fill="#fff" stroke="#ffb000" stroke-width="1"/>
<circle cx="399.7" cy="702.5" r="2" fill="#fff" stroke="#ffb000" stroke-width="1"/>
<circle cx="436.4" cy="707.7" r="2" fill="#fff" stroke="#ffb000" stroke-width="1"/>
<circle cx="473.0" cy="710.9" r="2" fill="#fff" stroke="#ffb000" stroke-width="1"/>
<circle cx="509.6" cy="710.3" r="2" fill="#fff" stroke="#ffb000" stroke-width="1"/>
<circle cx="546.2" cy="706.2" r="2" fill="#fff" stroke="#ffb000" stroke-width="1"/>
<circle cx="582.8" cy="706.0" r="2" fill="#fff" stroke="#ffb000" stroke-width="1"/>
<circle cx="619.5" cy="707.4" r="2" fill="#fff" stroke="#ffb000" stroke-width="1"/>
<circle cx="656.1" cy="703.1" r="2" fill="#fff" stroke="#ffb000" stroke-width="1"/>
<circle cx="692.7" cy="695.5" r="2" fill="#fff" stroke="#ffb000" stroke-width="1"/>
<circle cx="729.3" cy="697.5" r="2" fill="#fff" stroke="#ffb000" stroke-width="1"/>
<circle cx="765.9" cy="693.2" r="2" fill="#fff" stroke="#ffb000" stroke-width="1"/>
<circle cx="802.6" cy="689.1" r="2" fill="#fff" stroke="#ffb000" stroke-width="1"/>
<circle cx="839.2" cy="703.1" r="2" fill="#fff" stroke="#ffb000" stroke-width="1"/>
<circle cx="875.8" cy="696.3" r="2" fill="#fff" stroke="#ffb000" stroke-width="1"/>
<circle cx="912.4" cy="702.5" r="2" fill="#fff" stroke="#ffb000" stroke-width="1"/>
<circle cx="949.1" cy="709.3" r="2" fill="#fff" stroke="#ffb000" stroke-width="1"/>
<circle cx="985.7" cy="700.5" r="2" fill="#fff" stroke="#ffb000" stroke-width="1"/>
<circle cx="1022.3" cy="706.1" r="2" fill="#fff" stroke="#ffb000" stroke-width="1"/>
<circle cx="1058.9" cy="713.5" r="2" fill="#fff" stroke="#ffb000" stroke-width="1"/>
<circle cx="1095.5" cy="718.8" r="2" fill="#fff" stroke="#ffb000" stroke-width="1"/>
<circle cx="1132.2" cy="706.1" r="2" fill="#fff" stroke="#ffb000" stroke-width="1"/>
<circle cx="1168.8" cy="713.5" r="2" fill="#fff" stroke="#ffb000" stroke-width="1"/>
<circle cx="1205.4" cy="716.4" r="2" fill="#fff" stroke="#ffb000" stroke-width="1"/>
<circle cx="1242.0" cy="712.3" r="2" fill="#fff" stroke="#ffb000" stroke-width="1"/>
<circle cx="1278.6" cy="712.9" r="2" fill="#fff" stroke="#ffb000" stroke-width="1"/>
<circle cx="1315.3" cy="719.4" r="2" fill="#fff" stroke="#ffb000" stroke-width="1"/>
<circle cx="1351.9" cy="719.4" r="2" fill="#fff" stroke="#ffb000" stroke-width="1"/>
<circle cx="1388.5" cy="717.3" r="2" fill="#fff" stroke="#ffb000" stroke-width="1"/>
</svg>
<svg class="abs" style="left:1549px;top:600px" width="344" height="348" viewBox="1549 600 344 348">
<path d="M1717,774 L1717.00,691.00 A83,83 0 0 1 1731.68,855.69 Z" fill="#00dcfe" stroke="#fafafa" stroke-width="0.5"/>
<path d="M1717,774 L1731.68,855.69 A83,83 0 0 1 1634.57,783.75 Z" fill="#ffb200" stroke="#fafafa" stroke-width="0.5"/>
<path d="M1717,774 L1634.57,783.75 A83,83 0 0 1 1688.10,696.20 Z" fill="#0a68f5" stroke="#fafafa" stroke-width="0.5"/>
<path d="M1717,774 L1688.10,696.20 A83,83 0 0 1 1717.00,691.00 Z" fill="#ff6363" stroke="#fafafa" stroke-width="0.5"/>
<polyline points="1800,767 1813,765 1827,765" fill="none" stroke="#00dcfe" stroke-width="1"/>
<text x="1830" y="769.5" font-size="12" fill="#00dcfe">供水量</text>
<polyline points="1669.5,841 1655,853 1640,853" fill="none" stroke="#ffb200" stroke-width="1"/>
<text x="1636" y="857.5" text-anchor="end" font-size="12" fill="#ffb200">收费水量</text>
<polyline points="1646.5,730 1633,723 1619,723" fill="none" stroke="#0a68f5" stroke-width="1"/>
<text x="1616" y="727.5" text-anchor="end" font-size="12" fill="#0a68f5">漏损量</text>
<polyline points="1702.5,691.5 1676,677 1662,677" fill="none" stroke="#ff6363" stroke-width="1"/>
<text x="1658" y="681.5" text-anchor="end" font-size="12" fill="#ff6363">其他水量</text>
<rect x="1626" y="881.5" width="12" height="12" fill="#00dcfe"/>
<text x="1646.5" y="892.0" font-size="12" fill="#1cc8f2">供水量</text>
<text x="1770" y="892.0" font-size="12" fill="#1cc8f2">314.88</text>
<rect x="1626" y="897.4" width="12" height="12" fill="#ffb200"/>
<text x="1646.5" y="907.9" font-size="12" fill="#1cc8f2">收费水量</text>
<text x="1770" y="907.9" font-size="12" fill="#1cc8f2">173.27</text>
<rect x="1626" y="913.3" width="12" height="12" fill="#0a68f5"/>
<text x="1646.5" y="923.8" font-size="12" fill="#1cc8f2">漏损量</text>
<text x="1770" y="923.8" font-size="12" fill="#1cc8f2">141.61</text>
<rect x="1626" y="929.2" width="12" height="12" fill="#ff6363"/>
<text x="1646.5" y="939.7" font-size="12" fill="#1cc8f2">其他水量</text>
<text x="1770" y="939.7" font-size="12" fill="#1cc8f2">37.79</text>
</svg>
<svg class="abs" style="left:186px;top:387px" width="7" height="10" viewBox="0 0 7 10"><path d="M1,5 L6,1.2 V8.8Z" fill="#000"/></svg><div class="abs" style="left:0;top:945px;width:105px;height:18px;background:#f7f7f7;border:1px solid #dedede;border-left:none;border-bottom:none;font-size:12.5px;line-height:20px;color:#222;padding-left:3px;white-space:nowrap">javascript:void(0)</div>
</body></html>
